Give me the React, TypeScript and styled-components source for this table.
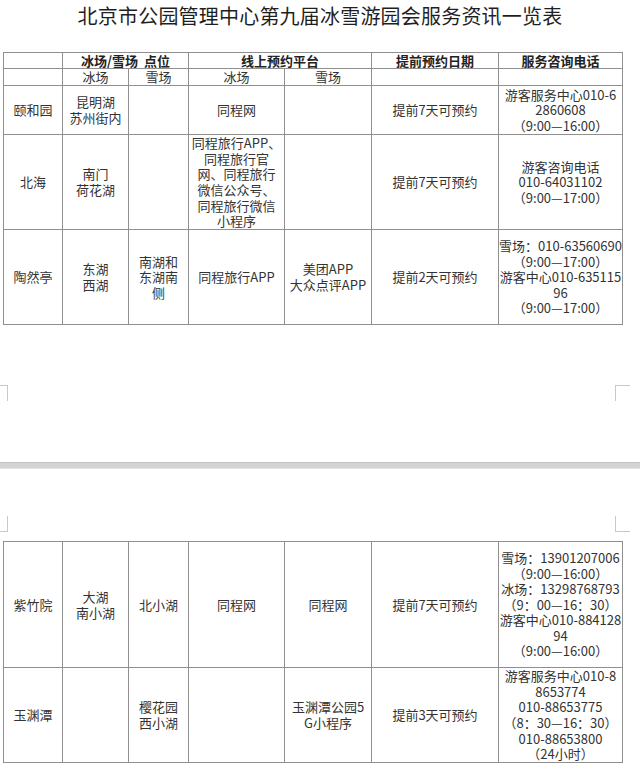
import React from "react";
import styled, { createGlobalStyle } from "styled-components";

const GlobalStyle = createGlobalStyle`
  html, body {
    margin: 0;
    padding: 0;
    background: #ffffff;
  }
  body {
    font-family: "Noto Sans CJK SC", "Noto Sans", "Liberation Sans", sans-serif;
    color: #2a2a2a;
  }
`;

type Lines = string[];
type Row = { height: number; cells: Lines[] };

const pageOneRows: Row[] = [
  {
    height: 49,
    cells: [
      ["颐和园"],
      ["昆明湖", "苏州街内"],
      [],
      ["同程网"],
      [],
      ["提前7天可预约"],
      ["游客服务中心010-6", "2860608", "（9:00—16:00）"],
    ],
  },
  {
    height: 95,
    cells: [
      ["北海"],
      ["南门", "荷花湖"],
      [],
      ["同程旅行APP、", "同程旅行官", "网、同程旅行", "微信公众号、", "同程旅行微信", "小程序"],
      [],
      ["提前7天可预约"],
      ["游客咨询电话", "010-64031102", "（9:00—17:00）"],
    ],
  },
  {
    height: 95,
    cells: [
      ["陶然亭"],
      ["东湖", "西湖"],
      ["南湖和", "东湖南", "侧"],
      ["同程旅行APP"],
      ["美团APP", "大众点评APP"],
      ["提前2天可预约"],
      ["雪场：010-63560690", "（9:00—17:00）", "游客中心010-635115", "96", "（9:00—17:00）"],
    ],
  },
];

const pageTwoRows: Row[] = [
  {
    height: 126,
    cells: [
      ["紫竹院"],
      ["大湖", "南小湖"],
      ["北小湖"],
      ["同程网"],
      ["同程网"],
      ["提前7天可预约"],
      [
        "雪场：13901207006",
        "（9:00—16:00）",
        "冰场：13298768793",
        "（9：00—16：30）",
        "游客中心010-884128",
        "94",
        "（9:00—16:00）",
      ],
    ],
  },
  {
    height: 95,
    cells: [
      ["玉渊潭"],
      [],
      ["樱花园", "西小湖"],
      [],
      ["玉渊潭公园5", "G小程序"],
      ["提前3天可预约"],
      ["游客服务中心010-8", "8653774", "010-88653775", "（8：30—16：30）", "010-88653800", "（24小时）"],
    ],
  },
];

const columns = [59, 66, 60, 96, 87, 127, 124];

function CellText({ lines }: { lines: Lines }) {
  return (
    <>
      {lines.map((line, i) => (
        <React.Fragment key={i}>
          {i > 0 && <br />}
          {line}
        </React.Fragment>
      ))}
    </>
  );
}

function Columns() {
  return (
    <colgroup>
      {columns.map((w, i) => (
        <col key={i} style={{ width: w }} />
      ))}
    </colgroup>
  );
}

function Body({ rows }: { rows: Row[] }) {
  return (
    <tbody>
      {rows.map((row, r) => (
        <tr key={r} style={{ height: row.height }}>
          {row.cells.map((lines, c) => (
            <Cell key={c}>
              <CellText lines={lines} />
            </Cell>
          ))}
        </tr>
      ))}
    </tbody>
  );
}

export default function App() {
  return (
    <>
      <GlobalStyle />
      <Sheet $height={462}>
        <Title>北京市公园管理中心第九届冰雪游园会服务资讯一览表</Title>
        <Table $top={21}>
          <Columns />
          <thead>
            <HeadRow $height={16}>
              <HeadCell />
              <HeadCell colSpan={2}>冰场/雪场&nbsp;&nbsp;点位</HeadCell>
              <HeadCell colSpan={2}>线上预约平台</HeadCell>
              <HeadCell>提前预约日期</HeadCell>
              <HeadCell>服务咨询电话</HeadCell>
            </HeadRow>
            <HeadRow $height={17}>
              <SubCell />
              <SubCell>冰场</SubCell>
              <SubCell>雪场</SubCell>
              <SubCell>冰场</SubCell>
              <SubCell>雪场</SubCell>
              <SubCell />
              <SubCell />
            </HeadRow>
          </thead>
          <Body rows={pageOneRows} />
        </Table>
        <Marks $top={60}>
          <Mark $sides="top-right" />
          <Mark $sides="top-left" />
        </Marks>
      </Sheet>
      <PageGap />
      <Sheet>
        <Marks $top={47}>
          <Mark $sides="bottom-right" />
          <Mark $sides="bottom-left" />
        </Marks>
        <Table $top={9}>
          <Columns />
          <Body rows={pageTwoRows} />
        </Table>
      </Sheet>
    </>
  );
}

const Sheet = styled.section<{ $height?: number }>`
  display: flex;
  flex-direction: column;
  height: ${(p) => (p.$height ? `${p.$height}px` : "auto")};
  background: #ffffff;
  overflow: hidden;
`;

const Title = styled.h1`
  margin: 0;
  height: 31px;
  line-height: 31px;
  text-align: center;
  font-size: 20px;
  font-weight: 400;
  letter-spacing: 0.2px;
  color: #1f1f1f;
`;

const Table = styled.table<{ $top: number }>`
  margin: ${(p) => p.$top}px 0 0 3px;
  width: 619px;
  table-layout: fixed;
  border-collapse: collapse;
  font-size: 13px;
  line-height: 15.6px;
  color: #333333;
`;

const HeadRow = styled.tr<{ $height: number }>`
  height: ${(p) => p.$height}px;
`;

const HeadCell = styled.th`
  border: 1px solid #8f8f8f;
  padding: 0;
  text-align: center;
  vertical-align: middle;
  font-weight: 700;
  font-size: 13px;
  line-height: 14px;
  white-space: nowrap;
  color: #222222;
`;

const SubCell = styled.td`
  border: 1px solid #8f8f8f;
  padding: 0;
  text-align: center;
  vertical-align: middle;
  font-size: 13px;
  line-height: 14px;
  white-space: nowrap;
`;

const Cell = styled.td`
  border: 1px solid #8f8f8f;
  padding: 0;
  text-align: center;
  vertical-align: middle;
  white-space: nowrap;
`;

const Marks = styled.div<{ $top: number }>`
  display: flex;
  justify-content: space-between;
  margin-top: ${(p) => p.$top}px;
  padding-right: 10px;
`;

const Mark = styled.span<{ $sides: "top-right" | "top-left" | "bottom-right" | "bottom-left" }>`
  display: block;
  width: ${(p) => (p.$sides.endsWith("right") ? "7px" : "14px")};
  height: 15px;
  ${(p) => (p.$sides.startsWith("top") ? "border-top" : "border-bottom")}: 1px solid #c8c8c8;
  ${(p) => (p.$sides.endsWith("right") ? "border-right" : "border-left")}: 1px solid #c8c8c8;
`;

const PageGap = styled.div`
  height: 7px;
  background: #d4d4d4;
  border-top: 1px solid #c4c4c4;
  border-bottom: 1px solid #e2e2e2;
  box-sizing: border-box;
`;
